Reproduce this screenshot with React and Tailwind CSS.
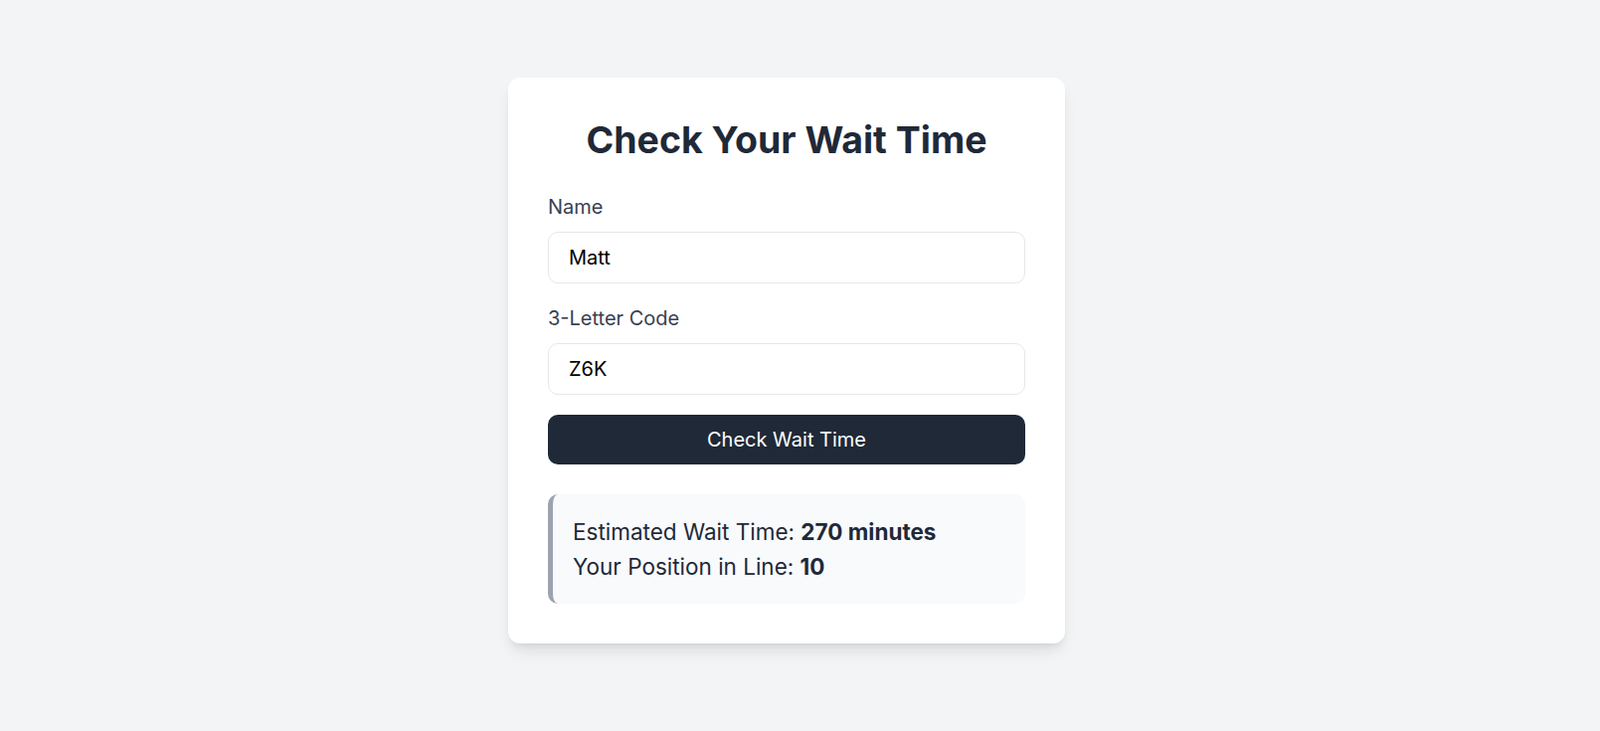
import React, { useState } from 'react'

function App() {
  const [name, setName] = useState('Matt')
  const [code, setCode] = useState('Z6K')

  return (
    <div className="min-h-screen bg-[#f3f4f6] flex justify-center pt-[78px] pr-[27px]" style={{ fontFamily: 'Inter, "Noto Sans", sans-serif' }}>
      <div className="w-[560px] h-fit bg-white rounded-[12px] p-[40px] shadow-[0_10px_15px_-3px_rgba(0,0,0,0.1),0_4px_6px_-4px_rgba(0,0,0,0.1)]">
        <h1 className="text-[37.5px] leading-[45px] font-bold text-[#1f2937] text-center mb-[30px]">Check Your Wait Time</h1>

        <label className="block text-[20px] leading-[30px] text-[#374151] mb-[10px]" htmlFor="name">Name</label>
        <input
          id="name"
          className="block w-full h-[52px] px-[20px] text-[20px] text-black border border-[#e5e7eb] rounded-[10px] mb-[20px] outline-none"
          value={name}
          onChange={(e) => setName(e.target.value)}
        />

        <label className="block text-[20px] leading-[30px] text-[#374151] mb-[10px]" htmlFor="code">3-Letter Code</label>
        <input
          id="code"
          className="block w-full h-[52px] px-[20px] text-[20px] text-black border border-[#e5e7eb] rounded-[10px] mb-[20px] outline-none"
          value={code}
          onChange={(e) => setCode(e.target.value)}
        />

        <button className="w-full h-[50px] bg-[#1f2937] text-white text-[20px] rounded-[10px]">Check Wait Time</button>

        <div className="mt-[30px] bg-[#f8fafc] border-l-[5px] border-[#9ca3af] rounded-[10px] p-[20px] text-[22.5px] leading-[35px] text-[#1f2937]">
          <p>Estimated Wait Time: <strong className="font-bold">270 minutes</strong></p>
          <p>Your Position in Line: <strong className="font-bold">10</strong></p>
        </div>
      </div>
    </div>
  )
}

export default App
